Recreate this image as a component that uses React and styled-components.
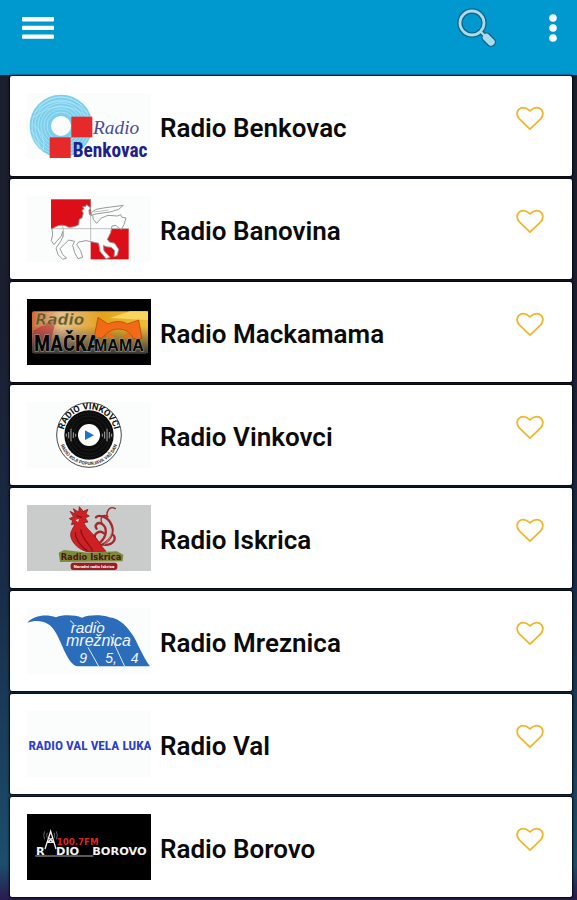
import React, { useState } from 'react';
import styled, { createGlobalStyle } from 'styled-components';

const GlobalStyle = createGlobalStyle`
  * {
    box-sizing: border-box;
  }

  body {
    margin: 0;
    background: #1b1d2b;
    font-family: Roboto, 'Liberation Sans', sans-serif;
  }
`;

// Layout

const Page = styled.div`
  display: flex;
  flex-direction: column;
  min-height: 100vh;
  background: linear-gradient(180deg, #1c1f2b 0%, #1b1e30 35%, #182c48 65%, #1c4e6c 96%, #2a1a50 100%);
`;

const Toolbar = styled.header`
  display: flex;
  align-items: flex-start;
  justify-content: space-between;
  height: 75px;
  padding: 8px 12px 0 18px;
  background: #0099cf;
`;

const Actions = styled.div`
  display: flex;
  gap: 44px;
`;

const IconButton = styled.button`
  display: flex;
  align-items: center;
  justify-content: center;
  width: ${(props) => props.$width}px;
  height: 40px;
  padding: 0;
  border: none;
  background: none;
  cursor: pointer;
`;

const StationList = styled.ul`
  display: flex;
  flex-direction: column;
  gap: 3px;
  margin: 0;
  padding: 1px 5px 3px 10px;
  list-style: none;
`;

const StationCard = styled.li`
  display: flex;
  align-items: center;
  gap: 9px;
  height: 100px;
  padding: 0 28px 0 17px;
  border-radius: 2px;
  background: #fff;
  box-shadow: 0 0 2px 1px #05060c;
`;

const Logo = styled.svg`
  flex: none;
  width: 124px;
  height: 66px;
  background: ${(props) => props.$background || '#fbfdfc'};
`;

const StationName = styled.h2`
  flex: 1;
  margin: 0;
  padding-top: 3px;
  color: #0b0b0b;
  font-size: 26px;
  font-weight: 600;
  line-height: 32px;
`;

const FavoriteButton = styled.button`
  align-self: flex-start;
  display: flex;
  margin-top: 30px;
  padding: 0;
  border: none;
  background: none;
  cursor: pointer;
`;

// Icons

function MenuIcon() {
    return (
        <svg width="32" height="22" viewBox="0 0 32 22" fill="#fff" aria-hidden="true">
            <rect y="0" width="32" height="4.4" rx="1" />
            <rect y="8.7" width="32" height="4.4" rx="1" />
            <rect y="17.4" width="32" height="4.4" rx="1" />
        </svg>
    );
}

function SearchIcon() {
    return (
        <svg width="40" height="40" viewBox="0 0 40 40" fill="none" strokeLinecap="round" aria-hidden="true">
            <path d="M24 24 L28 28" stroke="#17627f" strokeWidth="5" />
            <path d="M29.5 29.5 L34 34" stroke="#17627f" strokeWidth="10" />
            <circle cx="15" cy="15" r="12" stroke="#17627f" strokeWidth="5.4" />
            <circle cx="15" cy="15" r="12" stroke="#a5dcee" strokeWidth="2.8" />
            <path d="M24 24 L28 28" stroke="#a5dcee" strokeWidth="2.4" />
            <path d="M29.5 29.5 L34 34" stroke="#a5dcee" strokeWidth="7.4" />
        </svg>
    );
}

function MoreIcon() {
    return (
        <svg width="8" height="28" viewBox="0 0 8 28" fill="#fff" aria-hidden="true">
            <circle cx="4" cy="4" r="3.8" />
            <circle cx="4" cy="14" r="3.8" />
            <circle cx="4" cy="24" r="3.8" />
        </svg>
    );
}

function HeartIcon({ filled }) {
    return (
        <svg width="28" height="25" viewBox="0 0 28 25" aria-hidden="true">
            <path
                d="M14 23.2 L3.3 12.8 C-.2 9 .9 3.9 4.5 2.2 C8 .7 11 1.8 14 4.8 C17 1.8 20 .7 23.5 2.2 C27.1 3.9 28.2 9 24.7 12.8 Z"
                fill={filled ? '#efb62d' : 'none'}
                stroke="#efb62d"
                strokeWidth="1.8"
                strokeLinejoin="round"
            />
        </svg>
    );
}

// Station logos

function BenkovacLogo() {
    return (
        <Logo viewBox="81 69 372 198" role="img" aria-label="Radio Benkovac">
            <circle cx="183" cy="168" r="62" fill="none" stroke="#7ccfec" strokeWidth="64" />
            <g fill="none" stroke="#c0eaf6" strokeWidth="2">
                {[42, 51, 60, 69, 78, 87].map((r) => (
                    <circle key={r} cx="183" cy="168" r={r} />
                ))}
                <path d="M103 128 Q183 60 263 128 M98 144 Q183 76 268 144 M118 108 Q183 54 248 108 M94 160 Q140 190 130 240 M92 180 Q118 200 118 230 M96 200 L128 244" />
            </g>
            <rect x="214" y="140" width="63" height="62" fill="#e62a2b" />
            <rect x="149" y="202" width="63" height="62" fill="#e62a2b" />
            <text x="279" y="193" fill="#4a4a9c" fontFamily="Liberation Serif, serif" fontStyle="italic" fontSize="58">Radio</text>
            <text x="218" y="262" fill="#20208a" fontFamily="Roboto Condensed, Liberation Sans, sans-serif" fontWeight="700" fontSize="58">Benkovac</text>
        </Logo>
    );
}

function BanovinaLogo() {
    return (
        <Logo viewBox="21 18 372 198" role="img" aria-label="Radio Banovina">
            <rect x="93" y="28" width="120" height="88" fill="#dc0f18" />
            <rect x="212" y="116" width="114" height="92" fill="#dc0f18" />
            <path
                d="M96 118 C112 104 130 102 146 112 C160 112 170 108 176 104 L178 88 L186 84 L190 70 L186 62 L192 56 L188 50 L196 50 L200 44 L212 54 L207 60 L208 72 L214 78 L214 68 L228 58 L250 54 L310 46 L296 58 L270 66 L240 70 L218 74 L220 88 L230 100 L244 84 L264 76 L292 78 L302 74 L306 82 L318 84 L312 104 L304 118 L296 114 L288 106 L276 108 L272 128 L262 148 L268 156 L284 160 L296 178 L292 196 L282 200 L284 182 L274 172 L258 170 L250 166 L252 182 L270 202 L258 206 L240 184 L236 160 L218 156 L198 152 L176 156 L170 164 L182 182 L188 202 L174 206 L164 188 L158 166 L164 154 L146 150 L132 164 L120 176 L128 194 L140 204 L128 208 L114 194 L108 174 L122 154 L130 138 L128 124 L124 138 L110 154 L102 164 L94 152 L98 134 Z"
                fill="#fbfcfc"
                stroke="#999"
                strokeWidth="3"
                strokeLinejoin="round"
            />
            <path d="M100 116 H326 M212 30 V152 M128 110 Q134 124 128 140 M222 66 L266 60" fill="none" stroke="#a3a3a3" strokeWidth="2" />
        </Logo>
    );
}

function MackamamaLogo() {
    return (
        <Logo viewBox="21 15 372 198" $background="#000" role="img" aria-label="Radio Mackamama">
            <defs>
                <linearGradient id="macka-sky" x1="0" x2="1">
                    <stop offset="0" stopColor="#cf6a3a" />
                    <stop offset=".25" stopColor="#e9c08a" />
                    <stop offset=".6" stopColor="#e3a21c" />
                    <stop offset="1" stopColor="#eebf36" />
                </linearGradient>
                <linearGradient id="macka-shade" x1="0" x2="0" y1="0" y2="1">
                    <stop offset=".35" stopColor="#444" stopOpacity="0" />
                    <stop offset="1" stopColor="#333" stopOpacity=".95" />
                </linearGradient>
            </defs>
            <rect x="36" y="52" width="348" height="126" rx="6" fill="url(#macka-sky)" />
            <path d="M40 110 L110 70 L90 150 L40 160 Z" fill="#c2293a" opacity=".6" />
            <path d="M270 72 L330 52 L384 52 L384 78 Z" fill="#f8d65c" />
            <rect x="36" y="52" width="348" height="126" rx="6" fill="url(#macka-shade)" />
            <path d="M222 132 L234 70 L264 90 C284 80 306 80 322 90 L356 78 L366 134 L340 134 C326 96 270 96 248 132 Z" fill="#f26a16" stroke="#a3400c" strokeWidth="2" />
            <path d="M256 132 L270 114 L286 132 Z M308 132 L324 114 L336 132 Z" fill="#f26a16" />
            <text x="46" y="92" fill="#65592a" stroke="#d6c48b" strokeWidth="1" fontFamily="DejaVu Sans, sans-serif" fontWeight="700" fontStyle="italic" fontSize="46">Radio</text>
            <g fill="#080808" stroke="#a5a09a" strokeWidth="3" paintOrder="stroke" fontWeight="700">
                <text x="42" y="172" fontFamily="Roboto Condensed, Liberation Sans, sans-serif" fontSize="64">MAČKA</text>
                <text x="222" y="172" fontFamily="Liberation Sans, sans-serif" fontSize="48">MAMA</text>
            </g>
        </Logo>
    );
}

function VinkovciLogo() {
    return (
        <Logo viewBox="21 18 372 198" role="img" aria-label="Radio Vinkovci">
            <defs>
                <path id="vinkovci-top" d="M130 117 A77 77 0 0 1 284 117" />
                <path id="vinkovci-bottom" d="M117 117 A90 90 0 0 0 297 117" />
            </defs>
            <circle cx="207" cy="117" r="97" fill="#fff" stroke="#444" strokeWidth="3" />
            <circle cx="207" cy="117" r="74" fill="#0c0c0c" />
            <g fill="none" stroke="#383838" strokeWidth="1">
                <circle cx="207" cy="117" r="46" />
                <circle cx="207" cy="117" r="57" />
                <circle cx="207" cy="117" r="66" />
            </g>
            <path d="M139 113 V122 M146 108 V127 M153 98 V136 M160 109 V126 M167 113 V122 M247 113 V122 M254 107 V128 M261 98 V136 M268 108 V127 M275 113 V122" stroke="#a4a4a4" strokeWidth="3" />
            <circle cx="207" cy="117" r="33" fill="#fff" />
            <path d="M195 103 L222 118 L195 132 Z" fill="#1976c9" />
            <text fill="#111" fontFamily="Roboto, sans-serif" fontWeight="700" fontSize="27" textAnchor="middle">
                <textPath href="#vinkovci-top" startOffset="50%">RADIO VINKOVCI</textPath>
            </text>
            <text fill="#333" fontFamily="Roboto, sans-serif" fontWeight="700" fontSize="14" textAnchor="middle">
                <textPath href="#vinkovci-bottom" startOffset="50%">RADIO KOJI POPUNJAVA VAŠ DAN</textPath>
            </text>
        </Logo>
    );
}

function IskricaLogo() {
    return (
        <Logo viewBox="21 15 372 198" $background="#c9cccb" role="img" aria-label="Radio Iskrica">
            <g fill="none" stroke="#a5282a" strokeWidth="7" strokeLinecap="round">
                <path d="M232 138 C270 130 290 96 270 66 C260 50 236 42 228 52" />
                <path d="M240 128 C262 108 262 82 246 72 C232 64 222 76 230 86" />
                <path d="M226 120 C218 98 240 90 252 100" />
                <path d="M250 134 C282 138 292 112 278 104" />
                <path d="M262 58 C256 32 270 16 286 26" strokeWidth="4" />
                <path d="M246 70 C238 52 250 40 264 50" strokeWidth="4" />
            </g>
            <path d="M252 134 C274 116 280 92 268 76" fill="none" stroke="#e7b5ae" strokeWidth="2" />
            <path d="M150 34 L166 42 L160 26 L176 36 L178 20 L190 34 L204 28 L198 42 L208 48 L196 54 L204 66 L192 68 C196 82 212 94 222 106 C238 124 244 140 258 154 L212 156 C184 156 156 132 152 108 C150 94 162 82 164 72 L154 74 L158 62 L148 56 L160 50 Z" fill="#cf2024" stroke="#7d1315" strokeWidth="2" />
            <path d="M182 88 C184 116 208 130 218 152 M166 96 C166 118 184 142 202 152 M170 48 L186 52" fill="none" stroke="#861417" strokeWidth="4" />
            <path d="M166 60 L178 56 L174 66 Z" fill="#f3d9b0" />
            <path d="M116 158 L132 150 L204 158 L290 154 L310 164 L308 184 L120 186 Z" fill="#7d8a3a" />
            <text x="213" y="181" fill="#4e1710" fontFamily="DejaVu Sans, sans-serif" fontWeight="700" fontSize="25" textAnchor="middle">Radio Iskrica</text>
            <rect x="152" y="188" width="140" height="22" rx="8" fill="#9c1d20" />
            <text x="222" y="204" fill="#fff" fontFamily="Roboto, sans-serif" fontWeight="700" fontSize="13" textAnchor="middle">Narodni radio Iskrica</text>
        </Logo>
    );
}

function MreznicaLogo() {
    return (
        <Logo viewBox="21 12 372 198" role="img" aria-label="Radio Mreznica">
            <path d="M22 56 C42 34 78 30 108 40 C130 31 164 33 186 41 C208 32 244 32 268 40 C302 44 322 70 340 96 C352 116 370 160 390 187 L172 187 C142 180 128 120 106 84 C90 52 54 44 22 56 Z" fill="#2b6cbb" />
            <path d="M150 50 Q158 54 162 62 M230 50 Q238 54 240 60 M204 130 Q220 158 236 187 M272 96 Q290 136 314 187" fill="none" stroke="#dcebf8" strokeWidth="3" />
            <g fill="#f0f6fc" fontFamily="Liberation Sans, sans-serif" fontStyle="italic">
                <text x="152" y="86" fontSize="46">radio</text>
                <text x="138" y="125" fontSize="48">mrežnica</text>
                <g fontSize="42">
                    <text x="178" y="176">9</text>
                    <text x="256" y="176">5,</text>
                    <text x="332" y="176">4</text>
                </g>
            </g>
        </Logo>
    );
}

function ValLogo() {
    return (
        <Logo viewBox="21 15 372 198" role="img" aria-label="Radio Val Vela Luka">
            <text x="210" y="131" fill="#2c3fc6" fontFamily="Roboto Condensed, Liberation Sans, sans-serif" fontWeight="700" fontSize="40" textAnchor="middle">RADIO VAL VELA LUKA</text>
        </Logo>
    );
}

function BorovoLogo() {
    return (
        <Logo viewBox="81 72 372 198" $background="#000" role="img" aria-label="Radio Borovo">
            <path d="M135 177 L152 124 L168 177 M143 157 H160 M148 145 L160 157 M156 145 L144 157" fill="none" stroke="#eee" strokeWidth="4" />
            <path d="M142 128 Q138 136 142 144 M134 124 Q128 136 134 148 M162 128 Q166 136 162 144 M169 124 Q175 136 169 148" fill="none" stroke="#999" strokeWidth="2" />
            <path d="M106 198 H280" stroke="#777" strokeWidth="4" />
            <text x="170" y="165" fill="#dc2424" fontFamily="DejaVu Sans, sans-serif" fontWeight="700" fontSize="26">100.7FM</text>
            <g fill="#f4f4f4" fontFamily="DejaVu Sans, sans-serif" fontWeight="700" fontSize="34">
                <text x="108" y="194">R</text>
                <text x="168" y="194">DIO</text>
                <text x="440" y="194" textAnchor="end">BOROVO</text>
            </g>
        </Logo>
    );
}

const stations = [
    { name: 'Radio Benkovac', logo: <BenkovacLogo /> },
    { name: 'Radio Banovina', logo: <BanovinaLogo /> },
    { name: 'Radio Mackamama', logo: <MackamamaLogo /> },
    { name: 'Radio Vinkovci', logo: <VinkovciLogo /> },
    { name: 'Radio Iskrica', logo: <IskricaLogo /> },
    { name: 'Radio Mreznica', logo: <MreznicaLogo /> },
    { name: 'Radio Val', logo: <ValLogo /> },
    { name: 'Radio Borovo', logo: <BorovoLogo /> },
];

function App() {
    const [favorites, setFavorites] = useState([]);

    const toggleFavorite = (name) => {
        setFavorites((prev) =>
            prev.includes(name) ? prev.filter((item) => item !== name) : [...prev, name]
        );
    };

    return (
        <Page>
            <GlobalStyle />

            <Toolbar>
                <IconButton type="button" $width={40} aria-label="Menu">
                    <MenuIcon />
                </IconButton>
                <Actions>
                    <IconButton type="button" $width={40} aria-label="Search">
                        <SearchIcon />
                    </IconButton>
                    <IconButton type="button" $width={24} aria-label="More options">
                        <MoreIcon />
                    </IconButton>
                </Actions>
            </Toolbar>

            <StationList>
                {stations.map((station) => (
                    <StationCard key={station.name}>
                        {station.logo}
                        <StationName>{station.name}</StationName>
                        <FavoriteButton
                            type="button"
                            aria-label={`Favorite ${station.name}`}
                            aria-pressed={favorites.includes(station.name)}
                            onClick={() => toggleFavorite(station.name)}
                        >
                            <HeartIcon filled={favorites.includes(station.name)} />
                        </FavoriteButton>
                    </StationCard>
                ))}
            </StationList>
        </Page>
    );
}

export default App;
